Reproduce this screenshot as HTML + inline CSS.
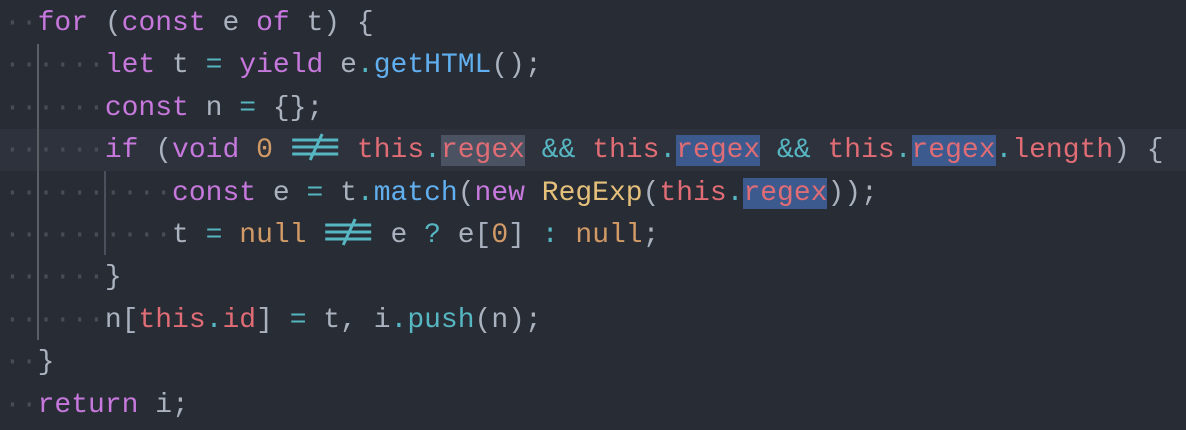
<!DOCTYPE html>
<html><head><meta charset="utf-8"><style>
html,body{margin:0;padding:0;background:#282c34;width:1186px;height:430px;overflow:hidden}
.l{position:absolute;left:4px;height:42.4px;line-height:42.4px;font-family:"Liberation Mono",monospace;font-size:28px;white-space:pre;color:#abb2bf}
.d{color:#474c57}
.k{color:#c678dd}.r{color:#e06c75}.b{color:#61afef}.c{color:#56b6c2}.o{color:#d19a66}.y{color:#e5c07b}
.hl{position:absolute;left:0;width:1186px;top:129px;height:42px;background:#2d323c}
.g{position:absolute;width:2px;background:#5a5f66}
.sg{background:#4b5363}.sb{background:#3d5a8e}
.ne{display:inline-block;width:50.4px;height:28px;vertical-align:middle;position:relative;top:-3px}
#w{position:absolute;left:0;top:2px}
</style></head><body>
<div class="hl"></div>
<div class="g" style="left:37px;top:44px;height:296px"></div>
<div class="g" style="left:104px;top:171px;height:84px;background:#4b515c"></div>
<div id="w">
<div class="l" style="top:1px"><span class="d">··</span><span class="k">for</span> (<span class="k">const</span> e <span class="k">of</span> t) {</div>
<div class="l" style="top:43.4px"><span class="d">······</span><span class="k">let</span> t <span class="c">=</span> <span class="k">yield</span> e<span class="c">.</span><span class="b">getHTML</span>();</div>
<div class="l" style="top:85.8px"><span class="d">······</span><span class="k">const</span> n <span class="c">=</span> {};</div>
<div class="l" style="top:128.2px"><span class="d">······</span><span class="k">if</span> (<span class="k">void</span> <span class="o">0</span> <svg class="ne" viewBox="0 0 50 28"><g stroke="#56b6c2" stroke-width="3"><line x1="2" y1="7" x2="48" y2="7"/><line x1="2" y1="14" x2="48" y2="14"/><line x1="2" y1="21" x2="48" y2="21"/><line x1="20" y1="27" x2="32" y2="1"/></g></svg> <span class="r">this</span><span class="c">.</span><span class="r sg">regex</span> <span class="c">&amp;&amp;</span> <span class="r">this</span><span class="c">.</span><span class="r sb">regex</span> <span class="c">&amp;&amp;</span> <span class="r">this</span><span class="c">.</span><span class="r sb">regex</span><span class="c">.</span><span class="r">length</span>) {</div>
<div class="l" style="top:170.6px"><span class="d">··········</span><span class="k">const</span> e <span class="c">=</span> t<span class="c">.</span><span class="b">match</span>(<span class="k">new</span> <span class="y">RegExp</span>(<span class="r">this</span><span class="c">.</span><span class="r sb">regex</span>));</div>
<div class="l" style="top:213px"><span class="d">··········</span>t <span class="c">=</span> <span class="o">null</span> <svg class="ne" viewBox="0 0 50 28"><g stroke="#56b6c2" stroke-width="3"><line x1="2" y1="7" x2="48" y2="7"/><line x1="2" y1="14" x2="48" y2="14"/><line x1="2" y1="21" x2="48" y2="21"/><line x1="20" y1="27" x2="32" y2="1"/></g></svg> e <span class="c">?</span> e[<span class="o">0</span>] <span class="c">:</span> <span class="o">null</span>;</div>
<div class="l" style="top:255.4px"><span class="d">······</span>}</div>
<div class="l" style="top:297.8px"><span class="d">······</span>n[<span class="r">this</span><span class="c">.</span><span class="r">id</span>] <span class="c">=</span> t, i<span class="c">.</span><span class="c">push</span>(n);</div>
<div class="l" style="top:340.2px"><span class="d">··</span>}</div>
<div class="l" style="top:382.6px"><span class="d">··</span><span class="k">return</span> i;</div>
</div>
</body></html>
